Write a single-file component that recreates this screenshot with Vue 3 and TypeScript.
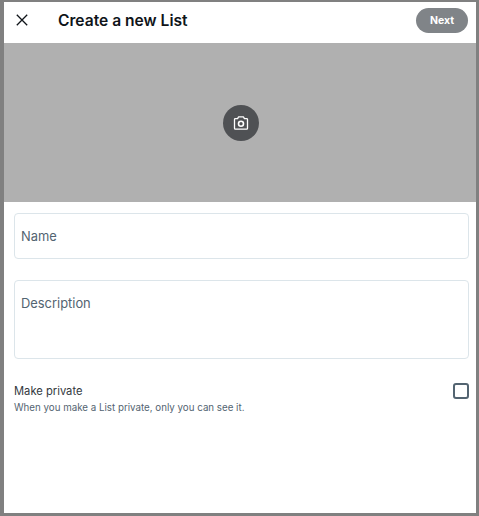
<script setup lang="ts">
const title: string = 'Create a new List'
</script>

<template>
  <div class="frame">
    <div class="dialog">
      <header class="head">
        <svg class="close" viewBox="0 0 12 12" width="12" height="12">
          <path d="M0.8 0.8 L11.2 11.2 M11.2 0.8 L0.8 11.2" stroke="#0f1419" stroke-width="1.3" fill="none" />
        </svg>
        <h1 class="title">{{ title }}</h1>
        <button class="next">Next</button>
      </header>
      <div class="banner">
        <div class="cam">
          <svg viewBox="0 0 16 16" width="16" height="16" fill="none" stroke="#fff" stroke-width="1.3">
            <path d="M1.5 4.4 Q1.5 3.6 2.4 3.6 H4.6 L5.6 1.8 H10.4 L11.4 3.6 H13.6 Q14.5 3.6 14.5 4.4 V13.2 Q14.5 14.2 13.6 14.2 H2.4 Q1.5 14.2 1.5 13.2 Z" stroke-linejoin="round" />
            <circle cx="8" cy="8.8" r="2.5" stroke-width="1.6" />
          </svg>
        </div>
      </div>
      <div class="form">
        <div class="field name">Name</div>
        <div class="field desc">Description</div>
        <div class="private">
          <div>
            <div class="pv-title">Make private</div>
            <div class="pv-sub">When you make a List private, only you can see it.</div>
          </div>
          <div class="check"></div>
        </div>
      </div>
    </div>
  </div>
</template>

<style>
html, body { margin: 0; background: #808080; }
</style>

<style scoped>
.frame {
  width: 479px;
  height: 516px;
  box-sizing: border-box;
  padding: 2px 3px 3px 4px;
  background: #808080;
  font-family: Inter, "Noto Sans", sans-serif;
}
.dialog {
  height: 100%;
  background: #fff;
  display: flex;
  flex-direction: column;
}
.head {
  height: 41px;
  box-sizing: border-box;
  display: flex;
  align-items: center;
  padding: 0 8px 5px 12px;
  flex: none;
}
.close { flex: none; }
.title {
  margin: 0 0 0 30px;
  font-size: 15.6px;
  font-weight: 600;
  color: #0f1419;
  flex: 1;
}
.next {
  width: 52px;
  height: 25px;
  border: 0;
  border-radius: 13px;
  background: #808488;
  color: #fff;
  font: 700 10.5px Inter, sans-serif;
  padding: 0;
}
.banner {
  height: 159px;
  background: #b0b0b0;
  display: flex;
  align-items: center;
  justify-content: center;
  padding-left: 2px;
  flex: none;
}
.cam {
  width: 36px;
  height: 36px;
  border-radius: 50%;
  background: #4f5154;
  display: flex;
  align-items: center;
  justify-content: center;
}
.form {
  padding: 11px 7.5px 0 10px;
}
.field {
  box-sizing: border-box;
  border: 1px solid #dce5ea;
  border-radius: 4px;
  padding: 0 6px;
  font-size: 12.9px;
  color: #536471;
}
.name {
  height: 46px;
  line-height: 46px;
}
.desc {
  height: 78.5px;
  margin-top: 21px;
  padding-top: 14px;
  line-height: 18px;
}
.private {
  display: flex;
  justify-content: space-between;
  align-items: flex-start;
  margin-top: 23.5px;
}
.pv-title {
  font-size: 11.2px;
  line-height: 16px;
  margin-top: 1px;
  color: #33393e;
}
.pv-sub {
  font-size: 9.75px;
  line-height: 14px;
  margin-top: 2px;
  color: #536471;
}
.check {
  box-sizing: border-box;
  width: 15.5px;
  height: 15.5px;
  border: 2px solid #536471;
  border-radius: 3px;
  margin-top: 1px;
}
</style>
